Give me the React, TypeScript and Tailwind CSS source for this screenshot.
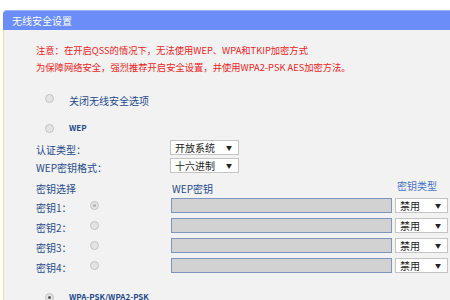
import type { ReactNode } from "react";

const font = "font-['Noto_Sans_CJK_SC','Noto_Sans',sans-serif]";

function Radio({ checked = false, dark = false }: { checked?: boolean; dark?: boolean }) {
  return (
    <span className="flex h-[9px] w-[9px] items-center justify-center rounded-full border border-[#c2c2c2] bg-[#e4e4e4]">
      {checked ? (
        <span className={`h-[3px] w-[3px] rounded-full ${dark ? "bg-[#555]" : "bg-[#b0b0b0]"}`} />
      ) : null}
    </span>
  );
}

function Select({ value, width }: { value: string; width: string }) {
  return (
    <div
      className={`flex h-[15px] items-center justify-between border border-[#c4c4c4] bg-white pl-[4px] pr-[6px] text-[10px] text-[#222] ${width}`}
    >
      <span>{value}</span>
      <span className="text-[6px] text-[#222]">▼</span>
    </div>
  );
}

function Label({ children }: { children: ReactNode }) {
  return <span className="text-[10px] text-[#1f4a8a]">{children}</span>;
}

const keys = ["密钥1：", "密钥2：", "密钥3：", "密钥4："];

export default function App() {
  return (
    <div className={`h-[300px] w-[450px] overflow-hidden bg-white pl-[3px] pt-[10px] ${font}`}>
      <header className="flex h-[20px] items-center rounded-tl-[4px] border-t border-[#9db4fa] bg-[#6a8df7] pl-[9px] text-[10px] text-white">
        无线安全设置
      </header>

      <div className="h-full border-l border-[#f1d98f] bg-[#f2f2f2] pl-[32px] pt-[12px]">
        <div className="text-[9.3px] leading-[17px] text-[#ee1d1d]">
          <p>注意：在开启QSS的情况下，无法使用WEP、WPA和TKIP加密方式</p>
          <p>为保障网络安全，强烈推荐开启安全设置，并使用WPA2-PSK AES加密方法。</p>
        </div>

        <div className="mt-[12px] flex h-[20px] items-center pl-[9px]">
          <Radio />
          <span className="ml-[15px]">
            <Label>关闭无线安全选项</Label>
          </span>
        </div>

        <div className="mt-[10px] flex h-[20px] items-center pl-[9px]">
          <Radio />
          <span className="ml-[15px] text-[8px] font-bold text-[#1f4a8a]">WEP</span>
        </div>

        <div className="flex h-[18px] items-center">
          <span className="w-[134px]">
            <Label>认证类型：</Label>
          </span>
          <Select value="开放系统" width="w-[69px]" />
        </div>
        <div className="flex h-[18px] items-center">
          <span className="w-[134px]">
            <Label>WEP密钥格式：</Label>
          </span>
          <Select value="十六进制" width="w-[69px]" />
        </div>

        <div className="mt-[2px] flex h-[19px] items-center">
          <span className="w-[136px]">
            <Label>密钥选择</Label>
          </span>
          <span className="w-[225px]">
            <Label>WEP密钥</Label>
          </span>
          <span className="text-[10px] text-[#4571c2]">密钥类型</span>
        </div>

        {keys.map((k, i) => (
          <div key={k} className="flex h-[20px] items-center">
            <span className="w-[54px]">
              <Label>{k}</Label>
            </span>
            <Radio checked={i === 0} />
            <span className="w-[72px]" />
            <div className="h-[15px] w-[221px] border border-[#7d95bf] bg-[#d2d2d2]" />
            <span className="w-[3px]" />
            <Select value="禁用" width="w-[53px]" />
          </div>
        ))}

        <div className="mt-[12px] flex h-[20px] items-center pl-[9px]">
          <Radio checked dark />
          <span className="ml-[15px] text-[8px] font-bold text-[#1f4a8a]">WPA-PSK/WPA2-PSK</span>
        </div>
      </div>
    </div>
  );
}
